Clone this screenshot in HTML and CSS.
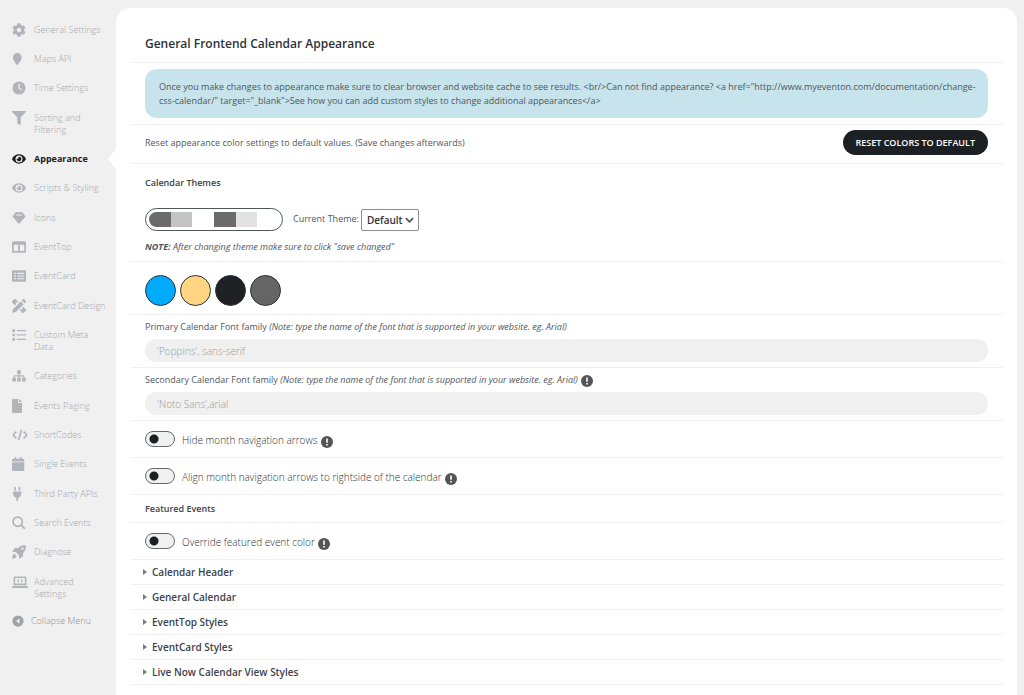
FILE: index.html
```html
<!DOCTYPE html>
<html lang="en">
<head>
<meta charset="utf-8">
<meta name="viewport" content="width=device-width, initial-scale=1">
<title>General Frontend Calendar Appearance</title>
<link rel="stylesheet" href="styles.css">
</head>
<body>
<div class="layout">
  <nav class="sidebar" aria-label="Settings">
    <ul class="menu">
      <li><a class="menu-item" href="#general"><svg class="icon" viewBox="0 0 512 512"><path d="M487.4 315.7l-42.6-24.6c4.3-23.2 4.3-47 0-70.2l42.6-24.6c4.9-2.8 7.1-8.6 5.5-14-11.1-35.6-30-67.8-54.7-94.6-3.8-4.1-10-5.1-14.8-2.3L380.8 110c-17.9-15.4-38.5-27.3-60.8-35.1V25.8c0-5.6-3.9-10.5-9.4-11.7-36.7-8.2-74.3-7.8-109.2 0-5.5 1.2-9.4 6.1-9.4 11.7V75c-22.2 7.9-42.8 19.8-60.8 35.1L88.7 85.5c-4.9-2.8-11-1.9-14.8 2.3-24.7 26.7-43.6 58.9-54.7 94.6-1.7 5.4.6 11.2 5.5 14L67.3 221c-4.3 23.2-4.3 47 0 70.2l-42.6 24.6c-4.9 2.8-7.1 8.6-5.5 14 11.1 35.6 30 67.8 54.7 94.6 3.8 4.1 10 5.1 14.8 2.3l42.6-24.6c17.9 15.4 38.5 27.3 60.8 35.1v49.2c0 5.6 3.9 10.5 9.4 11.7 36.7 8.2 74.3 7.8 109.2 0 5.5-1.2 9.4-6.1 9.4-11.7v-49.2c22.2-7.9 42.8-19.8 60.8-35.1l42.6 24.6c4.9 2.8 11 1.9 14.8-2.3 24.7-26.7 43.6-58.9 54.7-94.6 1.5-5.5-.7-11.3-5.6-14.1zM256 336c-44.1 0-80-35.9-80-80s35.9-80 80-80 80 35.9 80 80-35.9 80-80 80z"/></svg><span>General Settings</span></a></li>
      <li><a class="menu-item" href="#maps"><svg class="icon" viewBox="0 0 16 16"><path d="M6 1a5 5 0 0 1 5 5.200c0 2.500-3 6.800-5 9-2-2.200-5-6.500-5-9A5 5 0 0 1 6 1z"/></svg><span>Maps API</span></a></li>
      <li><a class="menu-item" href="#time"><svg class="icon" viewBox="0 0 16 16"><path fill-rule="evenodd" d="M8 .5a7.500 7.500 0 1 0 0 15 7.500 7.500 0 0 0 0-15zM7.300 3.500h1.500v4.200l2.700 2-.8 1.200-3.400-2.500z"/></svg><span>Time Settings</span></a></li>
      <li><a class="menu-item" href="#sorting"><svg class="icon" viewBox="0 0 512 512"><path d="M487.976 0H24.028C2.71 0-8.047 25.866 7.058 40.971L192 225.941V432c0 7.831 3.821 15.17 10.237 19.662l80 55.98C298.02 518.69 320 507.493 320 487.98V225.941l184.947-184.97C520.021 25.896 509.338 0 487.976 0z"/></svg><span>Sorting and Filtering</span></a></li>
      <li><a class="menu-item is-active" href="#appearance" aria-current="page"><svg class="icon" viewBox="0 0 576 512"><path d="M572.52 241.4C518.29 135.59 410.93 64 288 64S57.68 135.64 3.48 241.41a32.35 32.35 0 0 0 0 29.19C57.71 376.41 165.07 448 288 448s230.32-71.64 284.52-177.41a32.35 32.35 0 0 0 0-29.19zM288 400a144 144 0 1 1 144-144 143.93 143.93 0 0 1-144 144zm0-240a95.31 95.31 0 0 0-25.31 3.79 47.85 47.85 0 0 1-66.9 66.9A95.78 95.78 0 1 0 288 160z"/></svg><span>Appearance</span></a></li>
      <li><a class="menu-item" href="#scripts"><svg class="icon" viewBox="0 0 576 512"><path d="M572.52 241.4C518.29 135.59 410.93 64 288 64S57.68 135.64 3.48 241.41a32.35 32.35 0 0 0 0 29.19C57.71 376.41 165.07 448 288 448s230.32-71.64 284.52-177.41a32.35 32.35 0 0 0 0-29.19zM288 400a144 144 0 1 1 144-144 143.93 143.93 0 0 1-144 144zm0-240a95.31 95.31 0 0 0-25.31 3.79 47.85 47.85 0 0 1-66.9 66.9A95.78 95.78 0 1 0 288 160z"/></svg><span>Scripts &amp; Styling</span></a></li>
      <li><a class="menu-item" href="#icons"><svg class="icon" viewBox="0 0 16 16"><path fill-rule="evenodd" d="M4 1.500h8L15.500 6.300 8 14.800.5 6.300zM4.500 5.200h7L10.600 4H5.400z"/></svg><span>Icons</span></a></li>
      <li><a class="menu-item" href="#eventtop"><svg class="icon" viewBox="0 0 16 16"><path fill-rule="evenodd" d="M1.500 1.500h13A1.500 1.500 0 0 1 16 3v10a1.500 1.500 0 0 1-1.500 1.500h-13A1.500 1.500 0 0 1 0 13V3a1.500 1.500 0 0 1 1.500-1.500zM2 5.500v7h5v-7zm7 0v7h5v-7z"/></svg><span>EventTop</span></a></li>
      <li><a class="menu-item" href="#eventcard"><svg class="icon" viewBox="0 0 16 14"><path fill-rule="evenodd" d="M1.500.5h13A1.500 1.500 0 0 1 16 2v10a1.500 1.500 0 0 1-1.500 1.500h-13A1.500 1.500 0 0 1 0 12V2A1.500 1.500 0 0 1 1.500.5zM2.500 3v1.800h1.800V3zm3.300.3v1.300h8V3.300zM2.500 6.100v1.800h1.800V6.100zm3.300.3v1.300h8V6.400zM2.500 9.200V11h1.800V9.200zm3.300.3v1.300h8V9.500z"/></svg><span>EventCard</span></a></li>
      <li><a class="menu-item" href="#design"><svg class="icon" viewBox="0 0 16 16"><path d="M4.200.3 7.200 3.300 5.900 4.600 4.800 3.700 3.900 4.600l1 1.200L3.300 7.200.3 4.200a1.300 1.300 0 0 1 0-1.900L2.300.3a1.300 1.300 0 0 1 1.900 0zM12.700 8.800l3 3a1.300 1.300 0 0 1 0 1.900l-2 2a1.300 1.300 0 0 1-1.900 0l-3-3 1.400-1.300 1.100 1 .9-.9-1-1.100zM10.100 2.600l3.300 3.300-9 9L.2 15.800l.9-4.200zM11.100 1.600l1.100-1.200a1.300 1.300 0 0 1 1.900 0l1.500 1.500a1.300 1.300 0 0 1 0 1.900l-1.200 1.100z"/></svg><span>EventCard Design</span></a></li>
      <li><a class="menu-item" href="#meta"><svg class="icon" viewBox="0 0 16 16"><path d="M.5 1.500h3v3h-3zM5.500 2.200H16v1.500H5.500zM.5 6.500h3v3h-3zM5.500 7.200H16v1.500H5.500zM.5 11.500h3v3h-3zM5.500 12.200H16v1.500H5.500z"/></svg><span>Custom Meta Data</span></a></li>
      <li><a class="menu-item" href="#categories"><svg class="icon" viewBox="0 0 16 14"><path d="M6.500.5h3a.6.6 0 0 1 .6.6v3a.6.6 0 0 1-.6.6h-.8v1.500h4.700a.8.8 0 0 1 .8.800v2h.9a.6.6 0 0 1 .6.600v3a.6.600 0 0 1-.6.600h-3a.6.600 0 0 1-.6-.6v-3a.6.600 0 0 1 .6-.6h.9V7.500H8.700V9h.8a.6.600 0 0 1 .6.600v3a.6.600 0 0 1-.6.600h-3a.6.600 0 0 1-.6-.6v-3A.6.600 0 0 1 6.500 9h.8V7.500H3V9h.9a.6.600 0 0 1 .6.600v3a.6.600 0 0 1-.6.600h-3a.6.600 0 0 1-.6-.6v-3A.6.600 0 0 1 .9 9h.9V7a.8.800 0 0 1 .8-.8h4.700V4.700h-.8a.6.600 0 0 1-.6-.6v-3a.6.600 0 0 1 .6-.6z"/></svg><span>Categories</span></a></li>
      <li><a class="menu-item" href="#paging"><svg class="icon" viewBox="0 0 16 16"><path d="M1.500 0H7v4.500h4.500v10A1.500 1.500 0 0 1 10 16H1.500A1.500 1.500 0 0 1 0 14.500v-13A1.500 1.500 0 0 1 1.500 0zM8 0l3.500 3.500H8z"/></svg><span>Events Paging</span></a></li>
      <li><a class="menu-item" href="#shortcodes"><svg class="icon icon-wide" viewBox="0 0 20 16"><path class="stroke" d="M5.500 3.800 1.300 8l4.200 4.200M14.500 3.800 18.700 8l-4.200 4.200M11.800 1.500l-3.600 13"/></svg><span>ShortCodes</span></a></li>
      <li><a class="menu-item" href="#single"><svg class="icon" viewBox="0 0 16 16"><path d="M3 0h1.800v2h4.400V0H11v2h1.500A1.500 1.500 0 0 1 14 3.500V5H0V3.500A1.500 1.500 0 0 1 1.500 2H3zM0 6h14v8.500a1.500 1.500 0 0 1-1.500 1.500h-11A1.500 1.500 0 0 1 0 14.500z"/></svg><span>Single Events</span></a></li>
      <li><a class="menu-item" href="#third"><svg class="icon" viewBox="0 0 16 16"><path d="M2.500 0h2v4h-2zM7.500 0h2v4h-2zM.8 5h10.400v1.500h-.7V8c0 2.200-1.500 4-3.500 4.400V16H5v-3.600C3 12 1.500 10.200 1.500 8V6.500H.8z"/></svg><span>Third Party APIs</span></a></li>
      <li><a class="menu-item" href="#search"><svg class="icon" viewBox="0 0 16 16"><path class="stroke" d="M11.800 6.500a5.300 5.300 0 1 1-10.600 0 5.300 5.300 0 0 1 10.600 0zM10.500 10.500l4.300 4.300"/></svg><span>Search Events</span></a></li>
      <li><a class="menu-item" href="#diagnose"><svg class="icon" viewBox="0 0 16 16"><path fill-rule="evenodd" d="M15.700.4c.6 3.400-.2 6-3 8.700v3.300c0 .4-.2.700-.6.900L8.700 15.400c-.4.200-.8 0-.8-.5v-3.200L4.300 8.100H1.100c-.5 0-.7-.4-.5-.8l2-3.400c.2-.4.6-.6 1-.6h3.200C9.500.6 12.200-.2 15.700.4zM11.900 2.900a1.300 1.300 0 1 0 0 2.600 1.300 1.300 0 0 0 0-2.600zM1.500 10.700c1.300-1.300 4.600 1.900 3.200 3.300C3.900 14.900 1.900 15.500.2 15.700c.2-1.700.5-4.200 1.300-5z"/></svg><span>Diagnose</span></a></li>
      <li><a class="menu-item" href="#advanced"><svg class="icon icon-wide" viewBox="0 0 20 16"><path fill-rule="evenodd" d="M3.500 1h13A1.500 1.500 0 0 1 18 2.500V12H2V2.500A1.500 1.500 0 0 1 3.500 1zM4 3v7h12V3zM0 13h20v.5a2 2 0 0 1-2 2H2a2 2 0 0 1-2-2z"/><path d="m8.300 4.200.9.900-1.400 1.400 1.400 1.400-.9.900L6 6.500zM11.700 4.200l-.9.900 1.400 1.400-1.400 1.400.9.900L14 6.500z"/></svg><span>Advanced Settings</span></a></li>
    </ul>
    <button class="collapse" type="button"><svg class="collapse-icon" viewBox="0 0 16 16"><path fill-rule="evenodd" d="M8 .5a7.500 7.500 0 1 0 0 15 7.500 7.500 0 0 0 0-15zM10 4.500v7L5.500 8z"/></svg><span>Collapse Menu</span></button>
  </nav>

  <main class="panel">
    <header class="row row-title"><h1>General Frontend Calendar Appearance</h1></header>

    <div class="row row-notice"><p class="notice">Once you make changes to appearance make sure to clear browser and website cache to see results. &lt;br/&gt;Can not find appearance? &lt;a href="http://www.myeventon.com/documentation/change-css-calendar/" target="_blank"&gt;See how you can add custom styles to change additional appearances&lt;/a&gt;</p></div>

    <div class="row row-reset">
      <p>Reset appearance color settings to default values. (Save changes afterwards)</p>
      <button class="reset" type="button">RESET COLORS TO DEFAULT</button>
    </div>

    <section class="row row-themes">
      <h2>Calendar Themes</h2>
      <div class="theme">
        <div class="theme-preview"><div class="theme-colors"><i class="dark"></i><i class="mid"></i><i class="white"></i><i class="dark"></i><i class="light"></i><i class="white"></i></div></div>
        <label for="theme">Current Theme:</label>
        <span class="select"><select id="theme"><option>Default</option></select><svg viewBox="0 0 10 6"><path d="M1 1l4 4 4-4"/></svg></span>
      </div>
      <p class="note"><strong>NOTE:</strong> After changing theme make sure to click "save changed"</p>
    </section>

    <div class="row row-swatches">
      <button class="swatch blue" type="button" aria-label="Primary color"></button>
      <button class="swatch yellow" type="button" aria-label="Secondary color"></button>
      <button class="swatch black" type="button" aria-label="Text color"></button>
      <button class="swatch gray" type="button" aria-label="Muted color"></button>
    </div>

    <div class="row row-field">
      <label for="font1">Primary Calendar Font family <em>(Note: type the name of the font that is supported in your website. eg. Arial)</em></label>
      <input class="text" id="font1" type="text" placeholder="'Poppins', sans-serif">
    </div>
    <div class="row row-field">
      <label for="font2">Secondary Calendar Font family <em>(Note: type the name of the font that is supported in your website. eg. Arial)</em> <svg class="info" viewBox="0 0 12 12"><circle cx="6" cy="6" r="6"/><path d="M5.200 2.500h1.600v4.200H5.200zM5.200 7.900h1.600v1.600H5.200z"/></svg></label>
      <input class="text" id="font2" type="text" placeholder="'Noto Sans',arial">
    </div>

    <div class="row row-toggle"><input class="toggle" id="hide" type="checkbox"><label for="hide">Hide month navigation arrows <svg class="info" viewBox="0 0 12 12"><circle cx="6" cy="6" r="6"/><path d="M5.200 2.500h1.600v4.200H5.200zM5.200 7.900h1.600v1.600H5.200z"/></svg></label></div>
    <div class="row row-toggle"><input class="toggle" id="align" type="checkbox"><label for="align">Align month navigation arrows to rightside of the calendar <svg class="info" viewBox="0 0 12 12"><circle cx="6" cy="6" r="6"/><path d="M5.200 2.500h1.600v4.200H5.200zM5.200 7.900h1.600v1.600H5.200z"/></svg></label></div>
    <div class="row row-sub"><h2>Featured Events</h2></div>
    <div class="row row-toggle"><input class="toggle" id="override" type="checkbox"><label for="override">Override featured event color <svg class="info" viewBox="0 0 12 12"><circle cx="6" cy="6" r="6"/><path d="M5.200 2.500h1.600v4.200H5.200zM5.200 7.900h1.600v1.600H5.200z"/></svg></label></div>

    <button class="row section" type="button" aria-expanded="false">Calendar Header</button>
    <button class="row section" type="button" aria-expanded="false">General Calendar</button>
    <button class="row section" type="button" aria-expanded="false">EventTop Styles</button>
    <button class="row section" type="button" aria-expanded="false">EventCard Styles</button>
    <button class="row section" type="button" aria-expanded="false">Live Now Calendar View Styles</button>
  </main>
</div>
</body>
</html>
```
FILE: styles.css
```css
* { box-sizing: border-box; }

body {
  margin: 0;
  background: #f0f0f0;
  color: #50575e;
  font: 9px/14px "Open Sans", "Noto Sans", sans-serif;
}

h1, h2, p { margin: 0; }
button, input, select { font-family: inherit; color: inherit; }
button { cursor: pointer; }

.layout { display: flex; min-height: 100vh; }

/* Sidebar */
.sidebar { width: 116px; flex: none; padding-top: 15px; }
.menu { list-style: none; margin: 0; padding: 0; }
.menu li:nth-child(3n) { padding-bottom: 1px; }

.menu-item {
  position: relative;
  display: flex;
  align-items: flex-start;
  gap: 8px;
  padding: 9px 10px 8px 12px;
  color: #a3a7ab;
  font-weight: 300;
  line-height: 12px;
  text-decoration: none;
}
.icon { width: 14px; height: 14px; flex: none; margin: -1px 0; fill: #b1b5ba; }
.icon-wide { width: 16px; margin-right: -2px; }
.stroke { fill: none; stroke: #b1b5ba; stroke-width: 2; }

.menu-item.is-active { color: #1d2023; font-weight: 700; }
.menu-item.is-active .icon { fill: #1d2023; }
.menu-item.is-active::after {
  content: "";
  position: absolute;
  right: 0;
  top: 5px;
  border: 10px solid transparent;
  border-left-width: 0;
  border-right: 8px solid #fff;
}

.collapse {
  display: flex;
  align-items: center;
  gap: 7px;
  padding: 7px 0 8px 12px;
  border: 0;
  background: none;
  color: #8c9094;
  font-size: 9px;
  font-weight: 300;
  line-height: 12px;
}
.collapse-icon { width: 12px; height: 12px; fill: #a0a3a6; }

/* Content panel */
.panel {
  flex: 1;
  min-width: 0;
  margin: 8px 7px 0 0;
  padding: 0 14px;
  border-radius: 14px 14px 0 0;
  background: #fff;
}
.row { padding: 0 15px; border-bottom: 1px solid #f0f0f0; }

h1 { color: #2c3338; font-size: 12px; line-height: 18px; font-weight: 600; }
h2 { color: #3c434a; font-size: 9px; line-height: 14px; font-weight: 600; }

.row-title { padding-top: 27px; padding-bottom: 9px; }
.row-notice { padding-top: 6px; padding-bottom: 6px; }
.notice { padding: 11px 8px 10px 14px; border-radius: 12px; background: #c7e3eb; }

.row-reset { display: flex; align-items: center; justify-content: space-between; padding-top: 5px; padding-bottom: 8px; }
.reset {
  padding: 6px 13px;
  border: 0;
  border-radius: 13px;
  background: #1d2023;
  color: #fff;
  font-size: 9px;
  line-height: 13px;
  font-weight: 600;
}

.row-themes { padding-top: 12px; padding-bottom: 7px; }
.theme { display: flex; align-items: center; margin: 18px 0 9px; }
.theme label { padding-bottom: 2px; }
.theme-preview { width: 138px; height: 23px; margin-right: 10px; padding: 3px; border: 1px solid #50575e; border-radius: 12px; }
.theme-colors { display: flex; height: 15px; border-radius: 8px; overflow: hidden; }
.theme-colors i { flex: 1; }
.dark { background: #6b6b6b; }
.mid { background: #c4c4c4; }
.light { background: #e2e2e2; }
.white { background: #fff; }

.select { position: relative; display: flex; margin-left: 2px; }
.select select {
  appearance: none;
  height: 22px;
  width: 58px;
  padding: 0 5px;
  border: 1px solid #8c8f94;
  border-radius: 2px;
  background: #fff;
  color: #2c3338;
  font-size: 10px;
  font-weight: 600;
}
.select svg { position: absolute; right: 5px; top: 8px; width: 9px; height: 6px; fill: none; stroke: #50575e; stroke-width: 2; pointer-events: none; }
.note { font-style: italic; }

.row-swatches { display: flex; gap: 4px; padding-top: 13px; padding-bottom: 8px; }
.swatch { width: 31px; height: 31px; padding: 0; border: 1px solid #2c3338; border-radius: 50%; }
.blue { background: #00aaff; }
.yellow { background: #ffd584; }
.black { background: #202124; }
.gray { background: #656565; }

.row-field { padding-top: 5px; padding-bottom: 5px; }
.row-field label { display: block; margin-bottom: 5px; }
.text {
  display: block;
  width: 100%;
  height: 23px;
  padding: 0 12px;
  border: 0;
  border-radius: 12px;
  background: #f0f0f0;
  font-size: 10px;
  font-weight: 300;
}
.text::placeholder { color: #9a9a9a; opacity: 1; }

.info { width: 12px; height: 12px; margin: -1px 0 -1px 1px; vertical-align: -3px; fill: #555; }
.info path { fill: #fff; }

.row-toggle { display: flex; align-items: flex-start; gap: 7px; padding-top: 10px; padding-bottom: 10px; }
.row-toggle label { padding-top: 2px; font-size: 10px; line-height: 14px; font-weight: 300; color: #2c3338; }
.toggle {
  appearance: none;
  width: 30px;
  height: 16px;
  margin: 0;
  border: 1px solid #646970;
  border-radius: 8px;
  background: radial-gradient(circle at 8px 7px, #1d2023 4px, transparent 5px) #f0f0f0;
}

.row-sub { padding-top: 7px; padding-bottom: 6px; }

.section {
  display: flex;
  align-items: center;
  gap: 5px;
  width: 100%;
  padding: 5px 13px;
  border-width: 0 0 1px;
  background: none;
  color: #3c434a;
  font-size: 10px;
  line-height: 14px;
  font-weight: 600;
}
.section::before { content: ""; border: 3px solid transparent; border-left: 4px solid #787c82; border-right: 0; }
```
